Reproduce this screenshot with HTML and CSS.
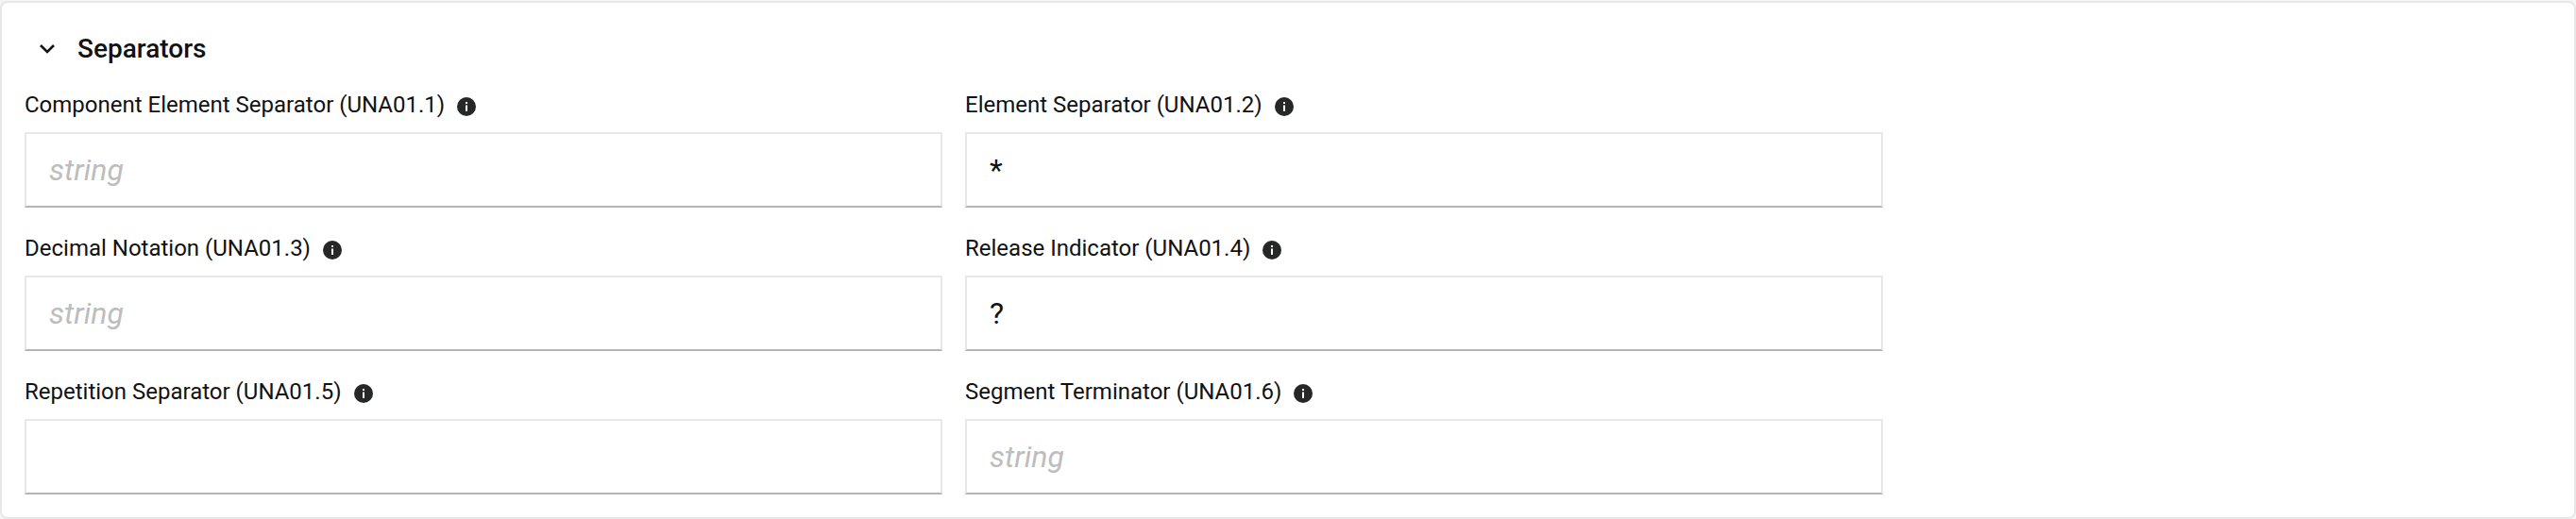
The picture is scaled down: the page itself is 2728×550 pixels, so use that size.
FILE: index.html
```
<!DOCTYPE html>
<html lang="en">
<head>
    <meta charset="UTF-8">
    <meta name="viewport" content="width=device-width, initial-scale=1.0">
    <title>Separators</title>
    <link rel="stylesheet" href="styles.css">
</head>
<body>
    <svg class="sprite" aria-hidden="true">
        <symbol id="icon-info" viewBox="0 0 20 20">
            <circle cx="10" cy="10" r="10" fill="#262727"/>
            <path d="M9 5h2v2H9zM9 8.5h2V15H9z" fill="#fff"/>
        </symbol>
    </svg>

    <section class="panel">
        <button class="panel-toggle" type="button" aria-expanded="true" aria-controls="separators">
            <svg class="chevron" viewBox="0 0 16 10" aria-hidden="true">
                <path d="M1 1l7 7 7-7" fill="none" stroke="currentColor" stroke-width="2.6"/>
            </svg>
            Separators
        </button>

        <div class="fields" id="separators">
            <div class="field">
                <div class="field-head">
                    <label for="una1">Component Element Separator (UNA01.1)</label>
                    <svg class="info"><use href="#icon-info"/></svg>
                </div>
                <input type="text" id="una1" placeholder="string">
            </div>
            <div class="field">
                <div class="field-head">
                    <label for="una2">Element Separator (UNA01.2)</label>
                    <svg class="info"><use href="#icon-info"/></svg>
                </div>
                <input type="text" id="una2" value="*">
            </div>
            <div class="field">
                <div class="field-head">
                    <label for="una3">Decimal Notation (UNA01.3)</label>
                    <svg class="info"><use href="#icon-info"/></svg>
                </div>
                <input type="text" id="una3" placeholder="string">
            </div>
            <div class="field">
                <div class="field-head">
                    <label for="una4">Release Indicator (UNA01.4)</label>
                    <svg class="info"><use href="#icon-info"/></svg>
                </div>
                <input type="text" id="una4" value="?">
            </div>
            <div class="field">
                <div class="field-head">
                    <label for="una5">Repetition Separator (UNA01.5)</label>
                    <svg class="info"><use href="#icon-info"/></svg>
                </div>
                <input type="text" id="una5" value=" ">
            </div>
            <div class="field">
                <div class="field-head">
                    <label for="una6">Segment Terminator (UNA01.6)</label>
                    <svg class="info"><use href="#icon-info"/></svg>
                </div>
                <input type="text" id="una6" placeholder="string">
            </div>
        </div>
    </section>
</body>
</html>
```
FILE: styles.css
```
* {
    box-sizing: border-box;
}

body {
    margin: 0;
    padding-top: 1px;
    font-family: Roboto, sans-serif;
    color: #111212;
    background-color: #f5f5f5;
}

.sprite {
    display: none;
}

.panel {
    padding: 24px;
    background-color: #fff;
    border: 2px solid #e7e7e7;
    border-radius: 8px;
}

.panel-toggle {
    display: flex;
    align-items: center;
    gap: 24px;
    padding: 0 16px;
    border: none;
    background: none;
    color: inherit;
    font-family: inherit;
    font-size: 28px;
    font-weight: 500;
    line-height: 50px;
    cursor: pointer;
}

.chevron {
    width: 16px;
    height: 10px;
}

.fields {
    display: grid;
    grid-template-columns: 1fr 1fr;
    gap: 24px;
    max-width: 1968px;
    margin-top: 15px;
}

.field-head {
    display: flex;
    align-items: center;
    gap: 13px;
    height: 48px;
    padding-bottom: 10px;
    font-size: 24px;
    line-height: 32px;
}

.info {
    width: 20px;
    height: 20px;
    margin-top: 4px;
}

.field input {
    display: block;
    width: 100%;
    height: 80px;
    padding: 0 24px;
    border: 2px solid #e7e7e7;
    border-bottom-color: #b5b5b5;
    border-radius: 0;
    background-color: #fff;
    color: inherit;
    font-family: inherit;
    font-size: 32px;
}

.field input::placeholder {
    color: #bdbdbd;
    font-style: italic;
    opacity: 1;
}
```
